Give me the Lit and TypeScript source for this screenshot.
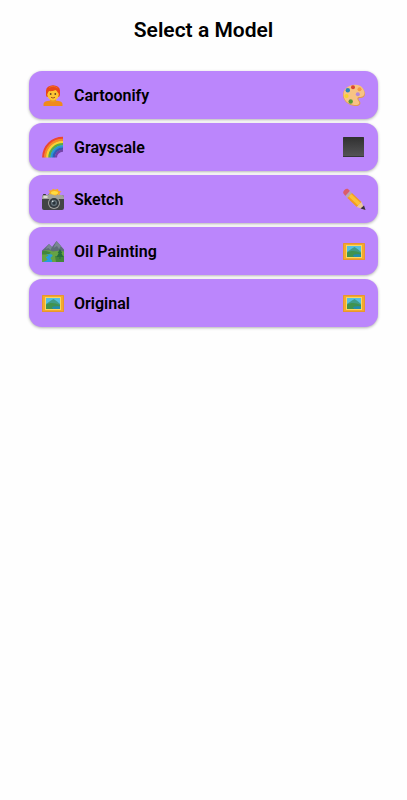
import { LitElement, html, css, svg } from "lit";
import { customElement, property } from "lit/decorators.js";

const person = svg`
  <path d="M6.500 26v-2c0-2.500 4-3.500 9.500-3.500s9.500 1 9.500 3.500v2z" fill="#f08a1c"/>
  <path d="M13 18h6v3c-1 1.500-5 1.500-6 0z" fill="#e99a22"/>
  <ellipse cx="16" cy="10.800" rx="7" ry="5.600" fill="#e8481a"/>
  <path d="M9 10.500h14v4.500q-.5 2-1.500 2h-11q-1.500 0-1.500-2z" fill="#e8481a"/>
  <ellipse cx="16" cy="14.500" rx="5.700" ry="6" fill="#fcc532"/>
  <path d="M9.500 13.500C9.500 8 12 6 16 6s6.500 2 6.500 7.500l-1.500-.5c-.5-1.500-1.500-2.500-2.500-3-2.500 1.200-5 1.300-6.500 1-.6.500-1 1.200-1.200 2.200z" fill="#e8481a"/>
  <path d="M12 7.500c2.500-1.700 6-1.500 8.500.5" stroke="#f56b22" fill="none"/>
  <circle cx="13.700" cy="14" r=".9" fill="#65442b"/>
  <circle cx="18.300" cy="14" r=".9" fill="#65442b"/>
  <path d="M14 17.200c1.300 1 2.700 1 4 0" stroke="#a65122" fill="none"/>`;

const rainbow = svg`
  <g fill="none" stroke-width="2.400">
    <path d="M6.300 25.500C6.300 14.500 15 6 26 6" stroke="#ec482f"/>
    <path d="M8.300 25.500C8.300 15.500 16 8 26 8" stroke="#f58a24"/>
    <path d="M10.400 25.500C10.400 16.800 17 10.200 26 10.200" stroke="#fbd42f"/>
    <path d="M12.500 25.500C12.500 18 18.300 12.300 26 12.300" stroke="#59ad43"/>
    <path d="M14.600 25.500C14.600 19 19.700 14.400 26 14.400" stroke="#2898d5"/>
    <path d="M16.700 25.500C16.700 20.500 20.700 16.500 26 16.500" stroke="#345bb5"/>
    <path d="M18.800 25.500C18.800 21.500 22 18.600 26 18.600" stroke="#7244a8"/>
  </g>`;

const camera = svg`
  <rect x="6" y="10" width="3" height="2" rx=".6" fill="#343638"/>
  <path d="M5 13q0-2 2-2h4l1.500-2h7l1.500 2h4q2 0 2 2v11q0 2-2 2H7q-2 0-2-2z" fill="#424446"/>
  <path d="M5 13q0-2 2-2h4l1.500-2h7l1.500 2h4q2 0 2 2v2H5z" fill="#a4a39a"/>
  <rect x="6.500" y="12" width="4" height="2" fill="#dddcd4"/>
  <circle cx="17" cy="19" r="6" fill="#a2a39f"/>
  <circle cx="17" cy="19" r="5" fill="#343b40"/>
  <circle cx="17" cy="19" r="3" fill="#65747c"/>
  <circle cx="17" cy="19" r="1.700" fill="#29333a"/>
  <circle cx="15.700" cy="17.400" r=".8" fill="#d5dddf"/>
  <path d="m12 10 1-2-1.500-1.500 3.200-.2L16 4.700l2 1.100 3-1 .5 2.200 3 .5-2 1.800.7 1.700-3-.5-2 1.300-2-1.300z" fill="#f7ae22"/>
  <ellipse cx="17.500" cy="8.800" rx="3.500" ry="1.900" fill="#ffdc43"/>`;

const park = svg`
  <path d="M5 25V14.500L12 8l3 3 4.500-6L27 13.500V25q0 1-1 1H6q-1 0-1-1z" fill="#5d6c78"/>
  <path d="m12 8 3 3-1.500 3-2-2-3 1zM19.500 5l4.500 5-2 3-2-3-3.500 2z" fill="#798792"/>
  <path d="M5 15.500c4-2 8-1 11 0 4-1 8-1 11 0V25q0 1-1 1H6q-1 0-1-1z" fill="#66a344"/>
  <path d="M5 15.500c3-1 6 0 9 1-2 2-5 2-9 2zM18 20h9v6h-8z" fill="#42863c"/>
  <path d="M9 18.500c7-1 8 1 5 2.800-2 1.500 2 2.200 1 4.700H6c4-1.700 6-2 3.500-3.700-2-1.500 2-2.200 2-2.800z" fill="#249de0"/>
  <path d="m23 13-2.300 4h1l-2.200 4h3v2h1v-2h3l-2.200-4h1z" fill="#266d3c"/>`;

const palette = svg`
  <path d="M15 5.300C22 3.500 27 9 27 14c0 4-4 4-5 4-2 0-2 1.500-.5 3 2.500 3-.5 5.500-4.500 5C9.500 25.500 5 20 5 15c0-5 4-8.600 10-9.700z" fill="#df9a53"/>
  <path d="M15 5C22 3.300 26.500 8.500 26.500 13c0 4-4 4-5 4-3 0-2.500 2.500-1 4 2 2.500-.5 4.500-4 4C9.500 24.500 5.500 19.500 5.500 14.500 5.500 9.500 9 6 15 5z" fill="#f8c383"/>
  <circle cx="19.800" cy="14.300" r="2" fill="#b486dc"/>
  <circle cx="15" cy="7.300" r="2" fill="#d94632"/>
  <circle cx="21.500" cy="9.300" r="2" fill="#f59c45"/>
  <circle cx="9.800" cy="10.200" r="2.200" fill="#2c87ba"/>
  <circle cx="8.500" cy="16" r="2.100" fill="#f7d32c"/>
  <circle cx="12.700" cy="21.500" r="2.200" fill="#579c36"/>`;

const square = svg`
  <defs><linearGradient id="shade" x2="0" y2="1">
    <stop stop-color="#303030"/><stop offset="1" stop-color="#555557"/>
  </linearGradient></defs>
  <rect x="5" y="5" width="21" height="20" rx=".5" fill="url(#shade)"/>
  <path d="M5 24.500h21" stroke="#353538"/>`;

const pencil = svg`
  <path d="M5.500 9.500C4 7.500 8 3.500 10 5l2 2-4.600 5z" fill="#dc5d68"/>
  <path d="m7.400 12 4.600-5 2 2-4.600 5z" fill="#b9aaae"/>
  <path d="m9.400 14 4.600-5 9.500 9-4.700 5z" fill="#f39d20"/>
  <path d="m10.700 12.600 2.500-2.700 9.400 9-2.500 2.700z" fill="#fbc138"/>
  <path d="m18.800 23 4.700-5 3.500 8z" fill="#ebc59b"/>
  <path d="m22.500 24.500 3.500-3L27.500 26z" fill="#382f3b"/>`;

const picture = svg`
  <rect x="5" y="7" width="22" height="17" rx=".5" fill="#e9982b"/>
  <rect x="6" y="8" width="20" height="15" fill="#f3a92f"/>
  <rect x="8" y="9" width="16" height="13" fill="#fbd85f"/>
  <rect x="9" y="10" width="14" height="11" fill="#55bfe0"/>
  <path d="m9 16 5-3.500 2.500-1.500 3 2 3.500 3v5H9z" fill="#3f9d88"/>
  <path d="M9 17c4-3 9-2 14 0v4H9z" fill="#3f9350"/>
  <path d="M15 19c2-1 5-.8 8-.5V21h-7z" fill="#238cae"/>`;

@customElement("model-icon")
export class ModelIcon extends LitElement {
  @property({ attribute: false }) art: unknown;

  static styles = css`
    :host { display: block; flex: none; }
    .icon { display: block; width: 24px; height: 24px; }
  `;

  render() {
    return html`<svg class="icon" viewBox="4 4 24 24" aria-hidden="true">${this.art}</svg>`;
  }
}

const models = [
  { name: "Cartoonify", start: person, end: palette },
  { name: "Grayscale", start: rainbow, end: square },
  { name: "Sketch", start: camera, end: pencil },
  { name: "Oil Painting", start: park, end: picture },
  { name: "Original", start: picture, end: picture },
];

@customElement("app-root")
export class AppRoot extends LitElement {
  static styles = css`
    :host {
      display: block;
      min-height: 100vh;
      box-sizing: border-box;
      padding: 16px 29px;
      background: #fefefe;
      color: #000;
      font-family: Roboto, "Liberation Sans", sans-serif;
    }
    .title {
      margin: 0 0 27px;
      font-size: 21px;
      line-height: 28px;
      font-weight: 600;
      text-align: center;
    }
    .list {
      display: flex;
      flex-direction: column;
      gap: 4px;
      margin: 0;
      padding: 0;
      list-style: none;
    }
    .model {
      display: flex;
      align-items: center;
      gap: 9px;
      width: 100%;
      height: 48px;
      padding: 2px 12px 0;
      border: 0;
      border-radius: 13px;
      background: #bb86fc;
      box-shadow: 0 1px 3px rgba(0, 0, 0, 0.3);
      color: inherit;
      font: 600 16px/20px Roboto, "Liberation Sans", sans-serif;
      text-align: left;
      cursor: pointer;
    }
    .name { flex: 1; }
  `;

  render() {
    return html`
      <main>
        <h1 class="title">Select a Model</h1>
        <ul class="list">
          ${models.map((m) => html`
            <li>
              <button class="model" type="button">
                <model-icon .art=${m.start}></model-icon>
                <span class="name">${m.name}</span>
                <model-icon .art=${m.end}></model-icon>
              </button>
            </li>`)}
        </ul>
      </main>`;
  }
}
